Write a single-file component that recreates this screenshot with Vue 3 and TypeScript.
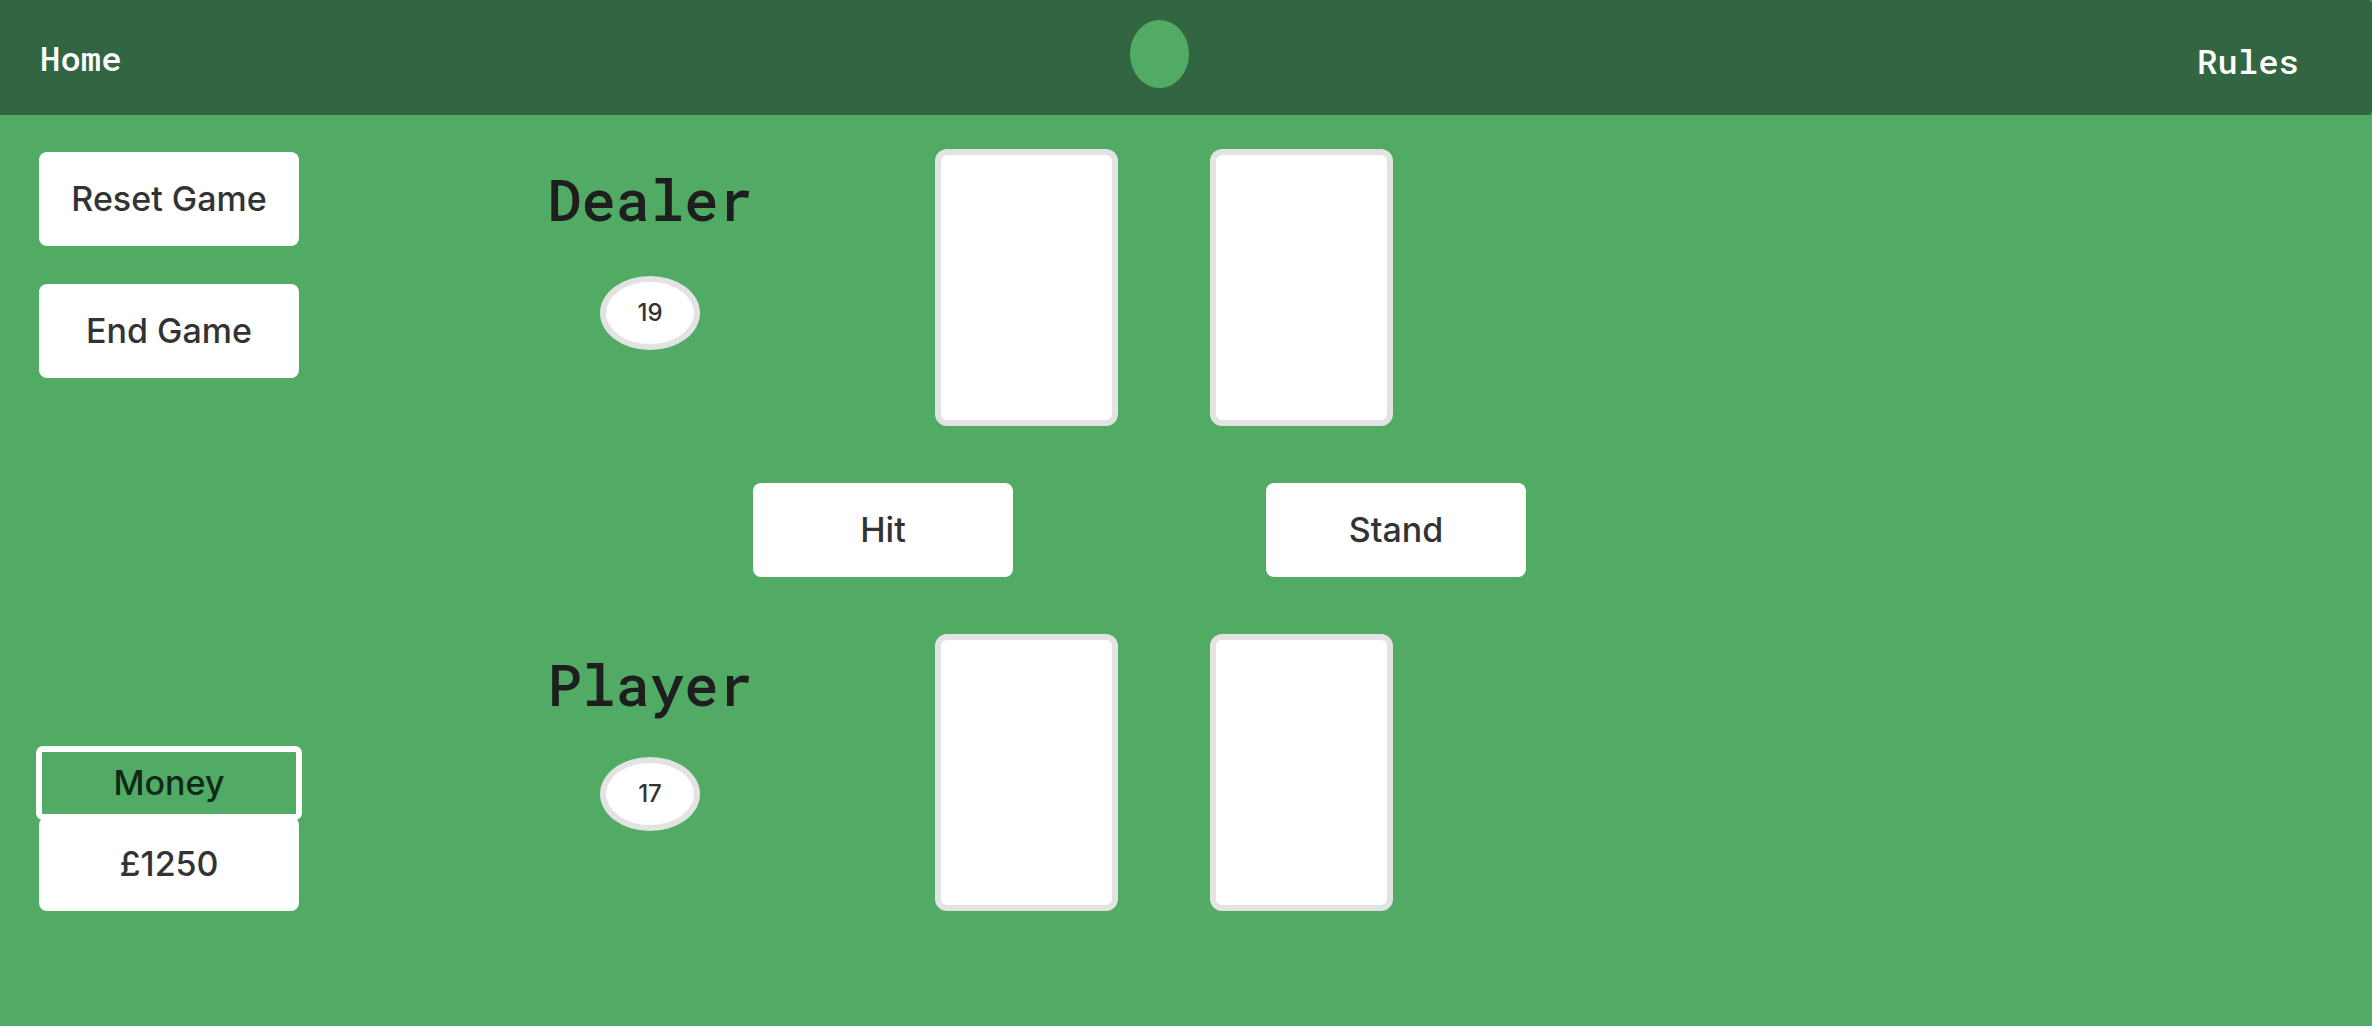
<script setup lang="ts">
interface Hand {
  name: string
  score: number
  cards: number
}

const dealer: Hand = { name: 'Dealer', score: 19, cards: 2 }
const player: Hand = { name: 'Player', score: 17, cards: 2 }
const money = 1250
</script>

<template>
  <div class="page">
    <header class="topbar">
      <a class="link home" href="#">Home</a>
      <span class="logo" aria-hidden="true"></span>
      <a class="link rules" href="#rules">Rules</a>
    </header>

    <main class="table">
      <aside class="sidebar">
        <button class="btn" type="button">Reset Game</button>
        <button class="btn" type="button">End Game</button>
        <section class="wallet">
          <h2 class="wallet-label">Money</h2>
          <p class="wallet-amount">£{{ money }}</p>
        </section>
      </aside>

      <div class="board">
        <section class="hand dealer">
          <div class="summary">
            <h1 class="name">{{ dealer.name }}</h1>
            <span class="score">{{ dealer.score }}</span>
          </div>
          <div v-for="n in dealer.cards" :key="n" class="card"></div>
        </section>

        <div class="actions">
          <button class="btn hit" type="button">Hit</button>
          <button class="btn stand" type="button">Stand</button>
        </div>

        <section class="hand player">
          <div class="summary">
            <h1 class="name">{{ player.name }}</h1>
            <span class="score">{{ player.score }}</span>
          </div>
          <div v-for="n in player.cards" :key="n" class="card"></div>
        </section>
      </div>
    </main>
  </div>
</template>

<style>
body {
  margin: 0;
  background: #52ab65;
}
</style>

<style scoped>
.page {
  min-height: 100vh;
  background: #52ab65;
  font-family: Inter, "Liberation Sans", sans-serif;
  color: #333333;
}

.page * {
  box-sizing: border-box;
}

.topbar {
  display: flex;
  align-items: center;
  justify-content: space-between;
  height: 115px;
  padding: 0 73px 8px 40px;
  border-radius: 0 4px 4px 0;
  background: #326541;
}

.link {
  color: #ffffff;
  font-family: "Roboto Mono", "DejaVu Sans Mono", monospace;
  font-size: 34px;
  font-weight: 500;
  line-height: 40px;
  text-decoration: none;
}

.home {
  padding-top: 8px;
}

.rules {
  padding-top: 14px;
}

.logo {
  width: 59px;
  height: 68px;
  border-radius: 50%;
  background: #52ab65;
}

.table {
  display: grid;
  grid-template-columns: 260px minmax(0, 249fr) minmax(0, 1785fr);
  padding: 34px 39px 40px;
}

.sidebar {
  display: flex;
  flex-direction: column;
  gap: 38px;
  padding-top: 3px;
}

.btn,
.wallet-amount {
  width: 260px;
  height: 94px;
  margin: 0;
  padding: 0;
  border: 0;
  border-radius: 8px;
  background: #ffffff;
  color: #333333;
  font-family: inherit;
  font-size: 34px;
  font-weight: 500;
  line-height: 94px;
  text-align: center;
}

.btn {
  cursor: pointer;
}

.wallet {
  margin-top: auto;
}

.wallet-label {
  height: 74px;
  margin: 0 -3px -3px;
  border: 6px solid #ffffff;
  border-radius: 7px;
  color: #102818;
  font-size: 34px;
  font-weight: 500;
  line-height: 62px;
  text-align: center;
}

.board {
  display: flex;
  grid-column: 3;
  flex-direction: column;
  gap: 57px;
}

.hand {
  display: grid;
  grid-template-columns: 204px 183fr 183px 92fr 183px 940fr;
}

.summary {
  display: flex;
  flex-direction: column;
  align-items: center;
  padding-top: 14px;
}

.name {
  margin: 0;
  color: #1e1e1e;
  font-family: "Roboto Mono", "DejaVu Sans Mono", monospace;
  font-size: 57px;
  font-weight: 500;
  line-height: 72px;
}

.score {
  width: 100px;
  height: 74px;
  border: 6px solid #e3e3e3;
  border-radius: 50%;
  background: #ffffff;
  font-size: 24px;
  font-weight: 500;
  line-height: 62px;
  text-align: center;
}

.dealer .score {
  margin-top: 41px;
}

.player .score {
  margin-top: 37px;
}

.card {
  height: 277px;
  border: 6px solid #e3e3e3;
  border-radius: 12px;
  background: #ffffff;
}

.card:nth-child(2) {
  grid-column: 3;
}

.card:nth-child(3) {
  grid-column: 5;
}

.actions {
  display: grid;
  grid-template-columns: 205fr 260px 253fr 260px 807fr;
}

.hit {
  grid-column: 2;
}

.stand {
  grid-column: 4;
}
</style>
